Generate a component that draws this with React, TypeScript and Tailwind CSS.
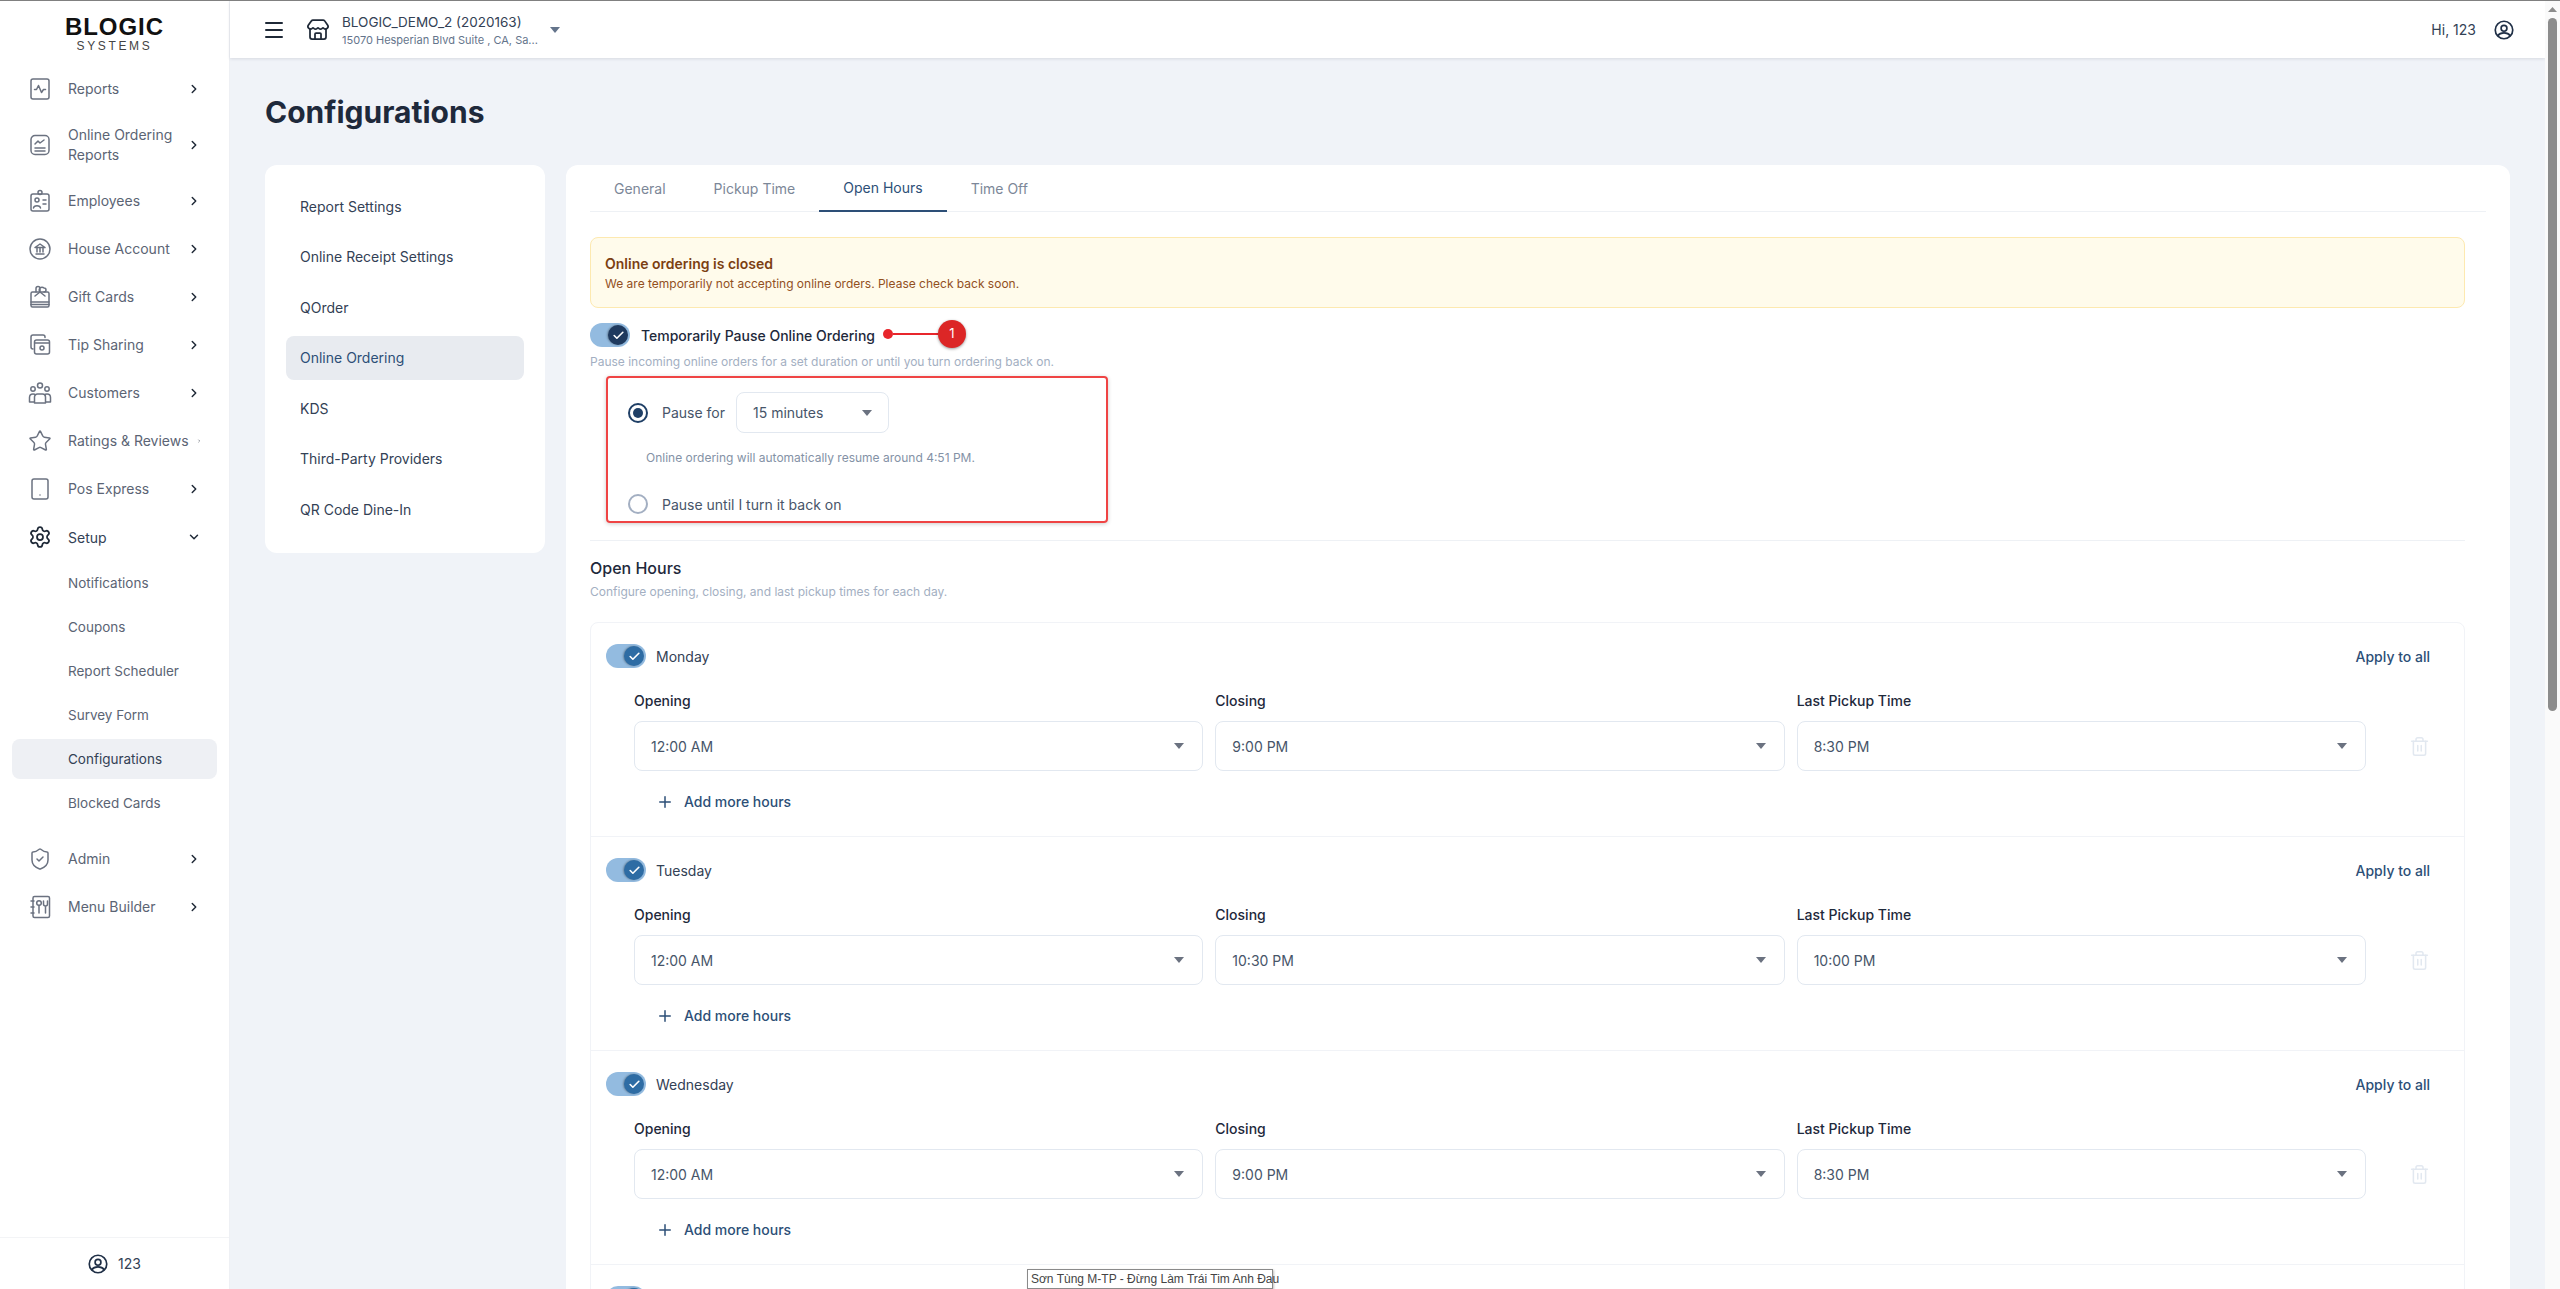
import type { ReactNode } from "react";
import { ChevronDown, ChevronRight, Menu, Plus, Settings, ShieldCheck, Star, Store, Tablet, Trash2, Check } from "lucide-react";

const strokeProps = {
  fill: "none",
  stroke: "currentColor",
  strokeWidth: 1.5,
  strokeLinecap: "round" as const,
  strokeLinejoin: "round" as const,
};

function IconSvg({ children }: { children: ReactNode }) {
  return (
    <svg width="24" height="24" viewBox="0 0 24 24" {...strokeProps}>
      {children}
    </svg>
  );
}

const ReportsIcon = () => (
  <IconSvg>
    <rect x="3" y="2" width="18" height="20" rx="2" />
    <path d="M6.5 12.5h2l2-4 3 7 2-3h2" />
  </IconSvg>
);
const OrderReportsIcon = () => (
  <IconSvg>
    <path d="M7 2.5h10a4 4 0 0 1 4 4v11a4 4 0 0 1-4 4H7a4 4 0 0 1-4-4v-11a4 4 0 0 1 4-4z" />
    <path d="M7 11l3-3 2 2 4-3M7 15h10M7 18h10" />
  </IconSvg>
);
const EmployeesIcon = () => (
  <IconSvg>
    <rect x="3" y="5" width="18" height="17" rx="2" />
    <circle cx="12" cy="3.5" r="2" />
    <circle cx="9" cy="11" r="2" />
    <path d="M5.5 19c.3-3 6.700-3 7 0M15 11h3M15 15h3" />
  </IconSvg>
);
const HouseIcon = () => (
  <IconSvg>
    <circle cx="12" cy="12" r="10" />
    <path d="M7 10.500 12 7l5 3.500zM8 17h8M9 11v4M12 11v4M15 11v4" />
  </IconSvg>
);
const GiftIcon = () => (
  <IconSvg>
    <rect x="3" y="7" width="18" height="15" rx="1.500" />
    <path d="M3 17h18M3 19.500h18M8 7V3.500a2 2 0 0 1 4 0V7a2 2 0 0 1 4-4 2 2 0 0 1 0 4M7 11l5-4 5 4" />
  </IconSvg>
);
const TipIcon = () => (
  <IconSvg>
    <path d="M17 4.500V4a2 2 0 0 0-2-2H5a2 2 0 0 0-2 2v10a2 2 0 0 0 2 2" />
    <rect x="6.500" y="7" width="15" height="14" rx="2" />
    <circle cx="14" cy="15" r="2" />
    <path d="M7 10h14" />
  </IconSvg>
);
const CustomersIcon = () => (
  <IconSvg>
    <circle cx="12" cy="4.500" r="2.500" />
    <circle cx="5" cy="8" r="2.200" />
    <circle cx="19" cy="8" r="2.200" />
    <path d="M1.500 21v-4.500c0-2 1.500-3.500 3.500-3.500 1 0 2 .3 2.500 1M22.500 21v-4.500c0-2-1.500-3.500-3.500-3.500-1 0-2 .3-2.500 1M6.500 22v-6a3 3 0 0 1 3-3h5a3 3 0 0 1 3 3v6zM1.500 21h5M17.500 21h5" />
  </IconSvg>
);
const MenuBuilderIcon = () => (
  <IconSvg>
    <path d="M5 4.500V3a1.500 1.500 0 0 1 1.500-1.500H20a1.500 1.500 0 0 1 1.500 1.500v18a1.500 1.500 0 0 1-1.500 1.500H6.500A1.500 1.500 0 0 1 5 21v-1.500V4.500z" />
    <path d="M3 6h3M3 12h3M3 18h3" />
    <circle cx="11" cy="8" r="2.300" />
    <path d="M11 10.500V18M15.500 6v3a2 2 0 0 0 4 0V6M17.500 11v7" />
  </IconSvg>
);
const UserCircleIcon = ({ size = 24 }: { size?: number }) => (
  <svg width={size} height={size} viewBox="0 0 24 24" fill="none" stroke="currentColor" strokeWidth="2">
    <circle cx="12" cy="12" r="10.500" />
    <circle cx="12" cy="10" r="3.500" />
    <path d="M4.500 19c2-3 4.500-3.500 7.500-3.500s5.500.5 7.500 3.500" />
  </svg>
);

type NavItem = { label: string; lines?: string[]; icon: ReactNode; h?: string; open?: boolean };

const topNav: NavItem[] = [
  { label: "Reports", icon: <ReportsIcon /> },
  { label: "Online Ordering Reports", lines: ["Online Ordering", "Reports"], icon: <OrderReportsIcon />, h: "h-[64px]" },
  { label: "Employees", icon: <EmployeesIcon /> },
  { label: "House Account", icon: <HouseIcon /> },
  { label: "Gift Cards", icon: <GiftIcon /> },
  { label: "Tip Sharing", icon: <TipIcon /> },
  { label: "Customers", icon: <CustomersIcon /> },
  { label: "Ratings & Reviews", icon: <Star size={24} strokeWidth={1.5} /> },
  { label: "Pos Express", icon: <Tablet size={24} strokeWidth={1.5} /> },
];

const subNav = ["Notifications", "Coupons", "Report Scheduler", "Survey Form", "Configurations", "Blocked Cards"];
const settingsNav = ["Report Settings", "Online Receipt Settings", "QOrder", "Online Ordering", "KDS", "Third-Party Providers", "QR Code Dine-In"];
const tabs = ["General", "Pickup Time", "Open Hours", "Time Off"];
const days = [
  { name: "Monday", closing: "9:00 PM", last: "8:30 PM" },
  { name: "Tuesday", closing: "10:30 PM", last: "10:00 PM" },
  { name: "Wednesday", closing: "9:00 PM", last: "8:30 PM" },
];

function Caret({ className = "text-[#6b7280]" }: { className?: string }) {
  return (
    <svg width="10" height="6" viewBox="0 0 10 6" className={className}>
      <path d="M0 0h10L5 6z" fill="currentColor" />
    </svg>
  );
}

function SideRow({ item }: { item: NavItem }) {
  return (
    <div className={`flex items-center pl-[28px] pr-[28px] text-[14px] text-[#5b6474] ${item.h ?? "h-[48px]"}`}>
      <span className="w-[40px] shrink-0 text-[#6b7280]">{item.icon}</span>
      <span className="flex-1 leading-[20px] pr-2">
        {(item.lines ?? [item.label]).map((l) => (
          <span key={l} className="block whitespace-nowrap">
            {l}
          </span>
        ))}
      </span>
      <ChevronRight size={14} strokeWidth={2.5} className="text-[#1f2937]" />
    </div>
  );
}

function Sidebar() {
  return (
    <aside className="flex w-[230px] shrink-0 flex-col border-r border-[#eef0f4] bg-white">
      <div className="flex h-[64px] flex-col items-center pt-[14px]">
        <span className="font-['Liberation_Sans',sans-serif] text-[24px] font-bold leading-[24px] tracking-[0.04em] text-[#111]">BLOGIC</span>
        <span className="font-['Liberation_Sans',sans-serif] text-[12px] leading-[14px] tracking-[0.22em] text-[#444]">SYSTEMS</span>
      </div>
      <nav className="flex flex-1 flex-col">
        {topNav.map((item) => (
          <SideRow key={item.label} item={item} />
        ))}
        <div className="flex h-[48px] items-center pl-[28px] pr-[28px] text-[14px] text-[#334155]">
          <span className="w-[40px] shrink-0 text-[#1f2937]">
            <Settings size={24} strokeWidth={1.75} />
          </span>
          <span className="flex-1">Setup</span>
          <ChevronDown size={14} strokeWidth={2.5} className="text-[#1f2937]" />
        </div>
        <div className="flex flex-col">
          {subNav.map((s) => (
            <div
              key={s}
              className={`mx-[12px] flex h-[44px] items-center pl-[56px] text-[13.5px] ${s === "Configurations" ? "text-[#334155]" : "text-[#5b6474]"}`}
            >
              {s === "Configurations" ? (
                <span className="-ml-[56px] flex h-[40px] w-[206px] items-center rounded-lg bg-[#eef0f4] pl-[56px]">{s}</span>
              ) : (
                s
              )}
            </div>
          ))}
        </div>
        <div className="mt-[10px]">
          <SideRow item={{ label: "Admin", icon: <ShieldCheck size={24} strokeWidth={1.5} /> }} />
          <SideRow item={{ label: "Menu Builder", icon: <MenuBuilderIcon /> }} />
        </div>
      </nav>
      <div className="flex h-[52px] items-center justify-center gap-[10px] border-t border-[#f3f4f6] text-[14px] text-[#334155]">
        <span className="text-[#1f2f46]">
          <UserCircleIcon size={20} />
        </span>
        123
      </div>
    </aside>
  );
}

function Header() {
  return (
    <header className="flex h-[57px] shrink-0 items-center bg-white pl-[32px] pr-[31px] shadow-[0_1px_3px_rgba(30,41,59,0.12)]">
      <Menu size={24} strokeWidth={2} className="text-[#1f2937]" />
      <Store size={24} strokeWidth={1.75} className="ml-[20px] text-[#1f2937]" />
      <div className="ml-[12px] flex flex-col">
        <span className="text-[13.5px] leading-[20px] text-[#334155]">BLOGIC_DEMO_2 (2020163)</span>
        <span className="text-[11px] leading-[16px] text-[#64748b]">15070 Hesperian Blvd Suite , CA, Sa...</span>
      </div>
      <span className="ml-[12px]">
        <Caret className="text-[#64748b]" />
      </span>
      <span className="ml-auto text-[14px] text-[#334155]">Hi, 123</span>
      <span className="ml-[18px] text-[#1f2f46]">
        <UserCircleIcon size={20} />
      </span>
    </header>
  );
}

function Toggle({ knob }: { knob: string }) {
  return (
    <span className="flex h-[24px] w-[40px] shrink-0 items-center justify-end rounded-full bg-[#93bbe0] pr-[2px]">
      <span className={`flex h-[20px] w-[20px] items-center justify-center rounded-full shadow-[-1px_0_2px_rgba(0,0,0,0.3)] ${knob}`}>
        <Check size={13} strokeWidth={3} className="text-white" />
      </span>
    </span>
  );
}

function TimeSelect({ label, value }: { label: string; value: string }) {
  return (
    <div className="flex min-w-0 flex-1 flex-col">
      <span className="mb-[10px] text-[14px] font-medium leading-[20px] text-[#1e293b]">{label}</span>
      <div className="flex h-[50px] items-center justify-between rounded-lg border border-[#e2e8f0] pl-[16px] pr-[18px] text-[14px] text-[#475569]">
        {value}
        <Caret />
      </div>
    </div>
  );
}

function DayRow({ name, closing, last }: { name: string; closing: string; last: string }) {
  return (
    <section className="h-[214px] border-b border-[#f1f3f7] pl-[15px] pr-[34px] pt-[21px]">
      <div className="flex h-[24px] items-center">
        <Toggle knob="bg-[#2e6ca4]" />
        <span className="ml-[10px] text-[14px] text-[#334155]">{name}</span>
        <span className="ml-auto text-[14px] font-medium text-[#2d4f77]">Apply to all</span>
      </div>
      <div className="mt-[23px] flex items-end pl-[28px]">
        <div className="flex flex-1 gap-[12px]">
          <TimeSelect label="Opening" value="12:00 AM" />
          <TimeSelect label="Closing" value={closing} />
          <TimeSelect label="Last Pickup Time" value={last} />
        </div>
        <div className="flex h-[50px] w-[64px] shrink-0 items-center justify-end pr-[0px]">
          <Trash2 size={21} strokeWidth={1.75} className="text-[#e2e8f0]" />
        </div>
      </div>
      <div className="mt-[20px] flex items-center pl-[50px] text-[14px] font-medium text-[#2d4f77]">
        <Plus size={18} strokeWidth={2} />
        <span className="ml-[10px]">Add more hours</span>
      </div>
    </section>
  );
}

export default function App() {
  return (
    <div className="relative flex h-[1289px] w-[2560px] overflow-hidden border-t border-[#808080] bg-[#f0f3f8] font-['Inter',sans-serif]">
      <Sidebar />
      <div className="flex min-w-0 flex-1 flex-col">
        <Header />
        <main className="flex min-h-0 flex-1 flex-col overflow-hidden pl-[35px] pr-[35px]">
          <h1 className="mt-[32px] h-[44px] text-[30px] font-bold leading-[44px] text-[#1e293b]">Configurations</h1>
          <div className="mt-[31px] flex min-h-0 flex-1 items-start gap-[21px]">
            <div className="flex h-[388px] w-[280px] shrink-0 flex-col rounded-xl bg-white px-[21px] pt-[19px]">
              {settingsNav.map((s) => (
                <div
                  key={s}
                  className={`flex h-[44px] shrink-0 items-center rounded-lg pl-[14px] text-[14px] [&:not(:last-child)]:mb-[6.500px] ${
                    s === "Online Ordering" ? "bg-[#e8ebf0] text-[#2d4f77]" : "text-[#334155]"
                  }`}
                >
                  {s}
                </div>
              ))}
            </div>
            <div className="h-[1200px] flex-1 rounded-t-xl bg-white pl-[24px] pr-[45px]">
              <div className="-mr-[21px] flex h-[47px] border-b border-[#eef1f5]">
                {tabs.map((t) => (
                  <div
                    key={t}
                    className={`flex h-[47px] items-center px-[24px] text-[14px] ${
                      t === "Open Hours" ? "border-b-2 border-[#2d4f77] text-[#2d4f77]" : "text-[#7c8798]"
                    }`}
                  >
                    {t}
                  </div>
                ))}
              </div>
              <div className="mt-[25px] flex h-[71px] flex-col justify-center rounded-lg border border-[#fde9b0] bg-[#fffbeb] pl-[14px]">
                <span className="text-[14px] font-semibold leading-[22px] text-[#7c3f12]">Online ordering is closed</span>
                <span className="text-[12px] leading-[18px] text-[#92501e]">We are temporarily not accepting online orders. Please check back soon.</span>
              </div>
              <div className="mt-[15px] flex h-[24px] items-center">
                <Toggle knob="bg-[#1f3a5f]" />
                <span className="ml-[11px] text-[14px] font-medium text-[#1e293b]">Temporarily Pause Online Ordering</span>
              </div>
              <p className="mt-[6px] text-[12px] leading-[18px] text-[#a3afc2]">Pause incoming online orders for a set duration or until you turn ordering back on.</p>
              <div className="relative ml-[16px] mt-[5px] h-[147px] w-[502px] rounded-[4px] border-2 border-[#ef4444] shadow-[0_1px_4px_rgba(0,0,0,0.2)]">
                <div className="ml-[20px] mt-[14px] flex h-[41px] items-center">
                  <span className="flex h-[20px] w-[20px] items-center justify-center rounded-full border-2 border-[#1f3f66]">
                    <span className="h-[10px] w-[10px] rounded-full bg-[#1f3f66]" />
                  </span>
                  <span className="ml-[14px] text-[14px] text-[#475569]">Pause for</span>
                  <div className="ml-[11px] flex h-[41px] w-[153px] items-center justify-between rounded-lg border border-[#e2e8f0] pl-[16px] pr-[16px] text-[14px] text-[#475569]">
                    15 minutes
                    <Caret />
                  </div>
                </div>
                <p className="ml-[38px] mt-[16px] text-[12px] leading-[18px] text-[#8492a6]">Online ordering will automatically resume around 4:51 PM.</p>
                <div className="ml-[20px] mt-[27px] flex h-[20px] items-center">
                  <span className="h-[20px] w-[20px] rounded-full border-2 border-[#a3afc2]" />
                  <span className="ml-[14px] text-[14px] text-[#475569]">Pause until I turn it back on</span>
                </div>
              </div>
              <div className="mt-[17px] border-t border-[#eef1f5]" />
              <h2 className="mt-[16px] text-[16px] font-medium leading-[22px] text-[#1e293b]">Open Hours</h2>
              <p className="mt-[4px] text-[12px] leading-[18px] text-[#a3afc2]">Configure opening, closing, and last pickup times for each day.</p>
              <div className="mt-[21px] rounded-lg border border-[#f1f3f7]">
                {days.map((d) => (
                  <DayRow key={d.name} {...d} />
                ))}
                <div className="pl-[15px] pt-[21px]">
                  <Toggle knob="bg-[#2e6ca4]" />
                </div>
              </div>
            </div>
          </div>
        </main>
      </div>
      <div className="flex w-[15px] shrink-0 flex-col items-center bg-[#fafafa]">
        <svg width="9" height="5" viewBox="0 0 9 5" className="mt-[6px] text-[#8c8c8c]">
          <path d="M0 5h9L4.500 0z" fill="currentColor" />
        </svg>
        <div className="mt-[6px] h-[693px] w-[9px] rounded-full bg-[#8c8c8c]" />
      </div>

      {/* annotation marker */}
      <div className="absolute left-[883px] top-[319px] flex items-center">
        <span className="h-[10px] w-[10px] rounded-full bg-[#e8262c]" />
        <span className="h-[2px] w-[45px] bg-[#e8262c]" />
        <span className="flex h-[28px] w-[28px] items-center justify-center rounded-full bg-[#dc2626] text-[13px] text-white shadow-[0_1px_3px_rgba(0,0,0,0.4)]">1</span>
      </div>

      {/* browser tooltip */}
      <div className="absolute left-[1027px] top-[1268px] flex h-[20px] w-[246px] items-center whitespace-nowrap border border-[#8a8a8a] bg-white px-[3px] font-['Liberation_Sans',sans-serif] text-[12px] text-[#444] shadow-[1px_1px_2px_rgba(0,0,0,0.25)]">
        Sơn Tùng M-TP - Đừng Làm Trái Tim Anh Đau
      </div>
    </div>
  );
}
